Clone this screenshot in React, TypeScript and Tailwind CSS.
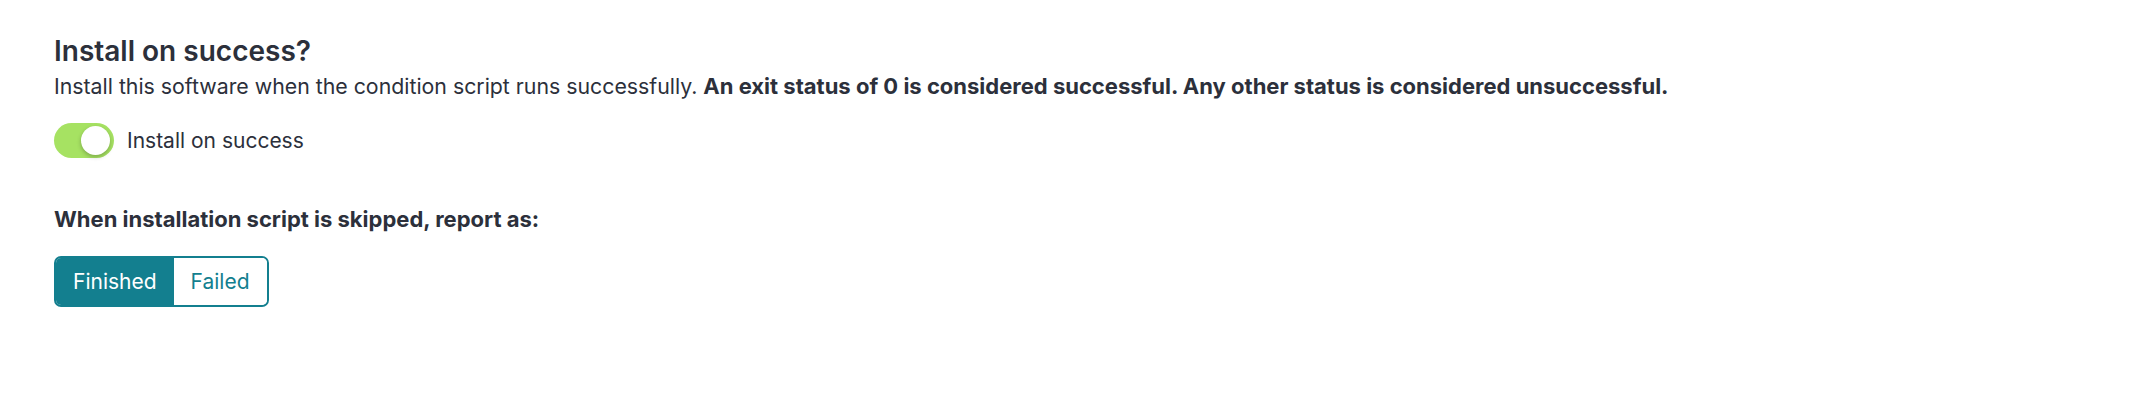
import React, { useState } from 'react';

export default function App() {
  const [enabled, setEnabled] = useState(true);
  const [report, setReport] = useState<'finished' | 'failed'>('finished');

  return (
    <div
      className="h-[412px] w-full bg-white pl-[54px] pt-[34px] text-[#2c303b]"
      style={{ fontFamily: 'Inter, "Noto Sans", sans-serif' }}
    >
      <h2 className="text-[28px] font-semibold leading-[34px]">Install on success?</h2>
      <p className="mt-[3px] text-[21.3px] leading-[30px]">
        Install this software when the condition script runs successfully.{' '}
        <span className="text-[22px] font-bold">
          An exit status of 0 is considered successful. Any other status is considered unsuccessful.
        </span>
      </p>

      <label className="mt-[22px] flex cursor-pointer items-center gap-[13px]">
        <button
          type="button"
          onClick={() => setEnabled(!enabled)}
          className={`relative h-[35px] w-[60px] shrink-0 rounded-full transition-colors ${
            enabled ? 'bg-[#a6e262]' : 'bg-gray-300'
          }`}
        >
          <span
            className={`absolute top-[3px] h-[29px] w-[29px] rounded-full bg-white shadow-[0_2px_4px_rgba(0,0,0,0.25)] transition-all ${
              enabled ? 'left-[27px]' : 'left-[3px]'
            }`}
          />
        </button>
        <span className="text-[21px] leading-[30px]">Install on success</span>
      </label>

      <p className="mt-[46px] text-[22px] font-bold leading-[30px]">
        When installation script is skipped, report as:
      </p>

      <div className="mt-[22px] inline-flex h-[51px] overflow-hidden rounded-[7px] border-2 border-[#137f8f] text-[21px]">
        <button
          type="button"
          onClick={() => setReport('finished')}
          className={`px-[17px] ${report === 'finished' ? 'bg-[#137f8f] text-white' : 'bg-white text-[#137f8f]'}`}
        >
          Finished
        </button>
        <button
          type="button"
          onClick={() => setReport('failed')}
          className={`px-[17px] ${report === 'failed' ? 'bg-[#137f8f] text-white' : 'bg-white text-[#137f8f]'}`}
        >
          Failed
        </button>
      </div>
    </div>
  );
}
